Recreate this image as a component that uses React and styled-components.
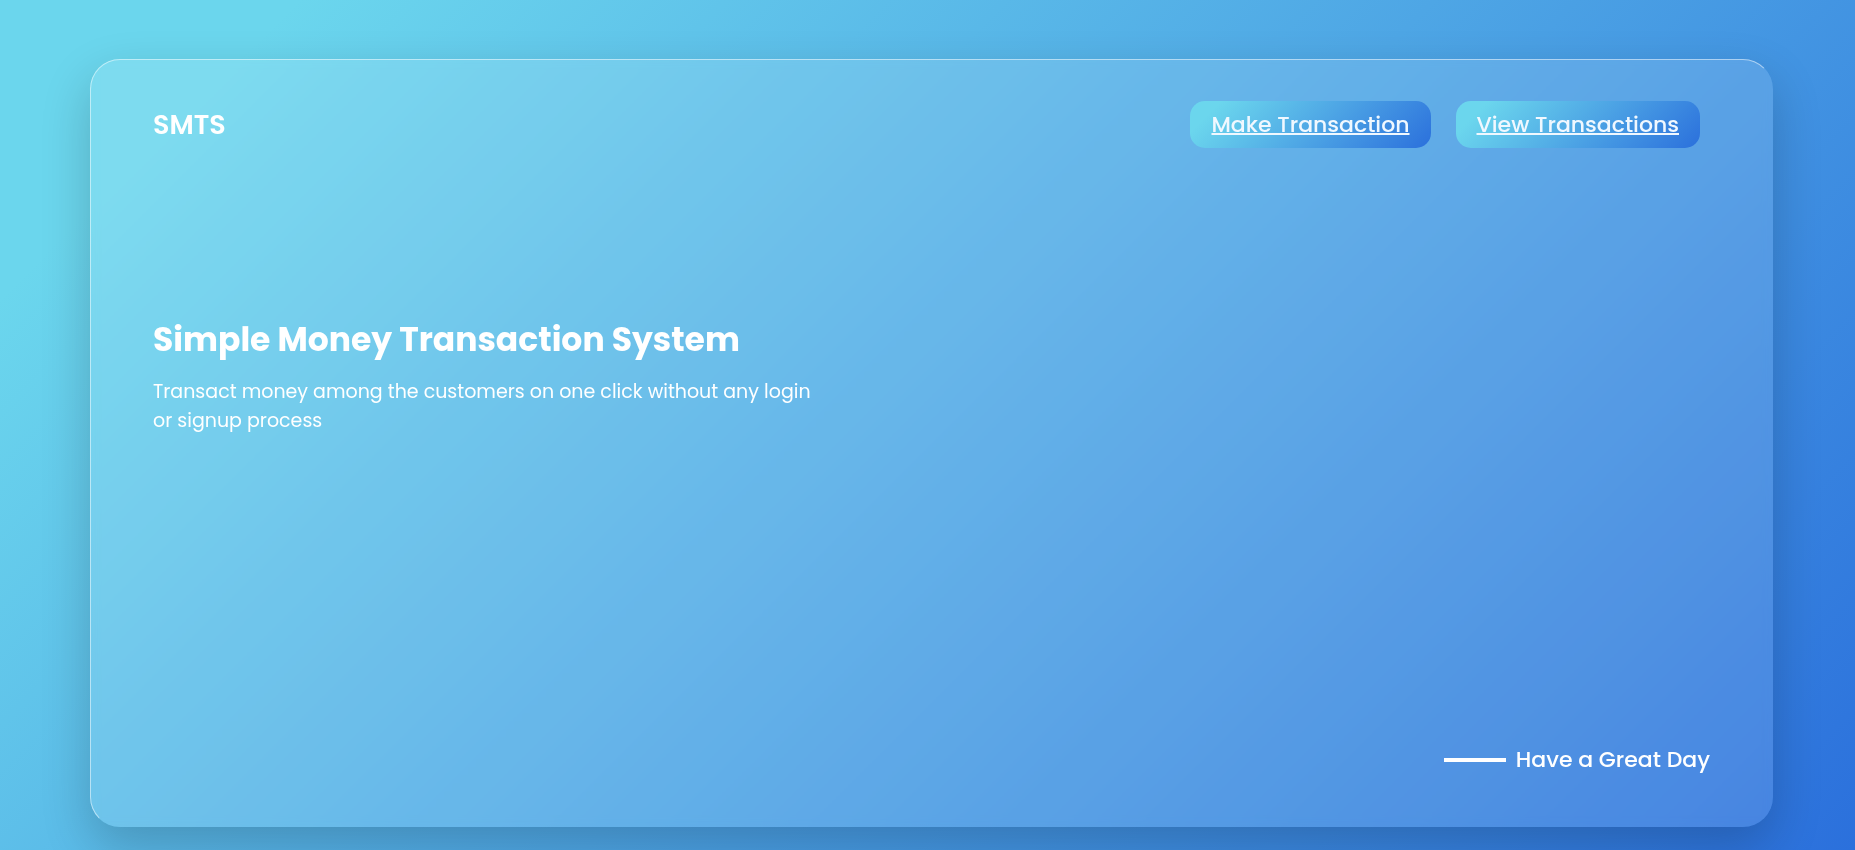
import React from "react";
import styled, { createGlobalStyle } from "styled-components";

const gradient = "linear-gradient(135deg, #6bd6ed 11%, #4ea6e5 53%, #2b70dc 100%)";

const GlobalStyle = createGlobalStyle`
  *, *::before, *::after { box-sizing: border-box; }
  body {
    margin: 0;
    font-family: Poppins, Inter, "Noto Sans", sans-serif;
    color: #fff;
  }
  h1, p { margin: 0; }
`;

const Page = styled.div`
  display: flex;
  min-height: 100vh;
  padding: 59px 82px 23px 90px;
  background: ${gradient};
`;

const Card = styled.div`
  flex: 1;
  display: flex;
  flex-direction: column;
  padding: 41px 62px;
  border: 1px solid transparent;
  border-top-color: rgba(255, 255, 255, 0.5);
  border-left-color: rgba(255, 255, 255, 0.5);
  border-radius: 30px;
  background: rgba(255, 255, 255, 0.12);
  box-shadow: 0 20px 50px rgba(0, 0, 0, 0.2);
  backdrop-filter: blur(5px);
`;

const Header = styled.header`
  display: flex;
  align-items: center;
  justify-content: space-between;
`;

const Logo = styled.a`
  color: #fff;
  font-size: 27px;
  font-weight: 600;
  line-height: 47px;
  text-decoration: none;
`;

const Nav = styled.nav`
  display: flex;
  gap: 25px;
  padding-right: 10px;
`;

const NavLink = styled.a`
  padding: 0 21px;
  border-radius: 15px;
  background: ${gradient};
  color: #f0f8ff;
  font-size: 22px;
  font-weight: 500;
  line-height: 47px;
  text-decoration-thickness: 2px;
`;

const Hero = styled.main`
  flex: 1;
  max-width: 664px;
  padding-top: 164px;
`;

const Title = styled.h1`
  font-size: 33px;
  font-weight: 700;
  line-height: 56px;
`;

const Description = styled.p`
  padding-top: 9px;
  font-size: 19px;
  line-height: 29px;
`;

const Footer = styled.footer`
  display: flex;
  align-items: center;
  justify-content: flex-end;
  gap: 10px;
  font-size: 22px;
  font-weight: 500;
  line-height: 50px;
`;

const Dash = styled.span`
  width: 62px;
  height: 4px;
  background: #fff;
`;

export default function App() {
  return (
    <>
      <GlobalStyle />
      <Page>
        <Card>
          <Header>
            <Logo href="#">SMTS</Logo>
            <Nav>
              <NavLink href="#make">Make Transaction</NavLink>
              <NavLink href="#view">View Transactions</NavLink>
            </Nav>
          </Header>
          <Hero>
            <Title>Simple Money Transaction System</Title>
            <Description>
              Transact money among the customers on one click without any login or signup process
            </Description>
          </Hero>
          <Footer>
            <Dash />
            <span>Have a Great Day</span>
          </Footer>
        </Card>
      </Page>
    </>
  );
}
